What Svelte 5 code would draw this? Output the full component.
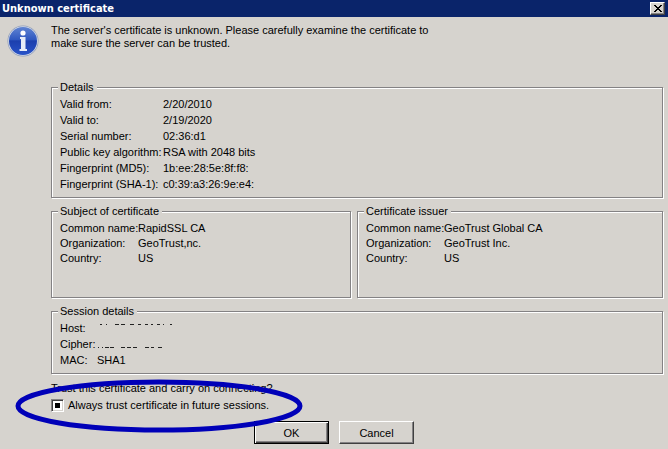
<script>
    let trust = $state(false);
    let partial = $state(true);

    const details = [
        ["Valid from:", "2/20/2010"],
        ["Valid to:", "2/19/2020"],
        ["Serial number:", "02:36:d1"],
        ["Public key algorithm:", "RSA with 2048 bits"],
        ["Fingerprint (MD5):", "1b:ee:28:5e:8f:f8:"],
        ["Fingerprint (SHA-1):", "c0:39:a3:26:9e:e4:"],
    ];
    const subject = [
        ["Common name:", "RapidSSL CA"],
        ["Organization:", "GeoTrust,nc."],
        ["Country:", "US"],
    ];
    const issuer = [
        ["Common name:", "GeoTrust Global CA"],
        ["Organization:", "GeoTrust Inc."],
        ["Country:", "US"],
    ];
</script>

{#snippet rows(list)}
    {#each list as [label, value]}
        <dt>{label}</dt>
        <dd>{value}</dd>
    {/each}
{/snippet}

<div class="dialog">
    <header>
        <h1>Unknown certificate</h1>
        <button class="close" aria-label="Close">
            <svg width="8" height="7" viewBox="0 0 8 7" shape-rendering="crispEdges">
                <path d="M0 0h2v1h1v1h2v-1h1v-1h2v1h-1v1h-1v1h-1v1h1v1h1v1h1v1h-2v-1h-1v-1h-2v1h-1v1h-2v-1h1v-1h1v-1h1v-1h-1v-1h-1v-1h-1z" />
            </svg>
        </button>
    </header>

    <main>
        <svg class="info" width="32" height="32" viewBox="0 0 32 32">
            <defs>
                <linearGradient id="ball" x1="0" y1="0" x2="0" y2="1">
                    <stop offset="0" stop-color="#5f83d2" />
                    <stop offset="0.45" stop-color="#2f58c0" />
                    <stop offset="0.5" stop-color="#1c3fae" />
                    <stop offset="1" stop-color="#2853c8" />
                </linearGradient>
            </defs>
            <circle cx="16" cy="16" r="15.5" fill="#8f9cb8" />
            <circle cx="16" cy="16" r="14.8" fill="#d5dbe8" />
            <circle cx="16" cy="16" r="14" fill="url(#ball)" />
            <circle cx="16" cy="8" r="2.6" fill="#fff" />
            <path d="M13 12h5.500v12h1.500v2h-7.500v-2h1.500v-10h-1z" fill="#e6ecf8" />
        </svg>

        <div class="body">
            <p class="message">
                The server's certificate is unknown. Please carefully examine the certificate to
                make sure the server can be trusted.
            </p>

            <fieldset class="details">
                <legend>Details</legend>
                <dl>{@render rows(details)}</dl>
            </fieldset>

            <div class="parties">
                <fieldset>
                    <legend>Subject of certificate</legend>
                    <dl>{@render rows(subject)}</dl>
                </fieldset>
                <fieldset>
                    <legend>Certificate issuer</legend>
                    <dl>{@render rows(issuer)}</dl>
                </fieldset>
            </div>

            <fieldset class="session">
                <legend>Session details</legend>
                <dl>
                    <dt>Host:</dt>
                    <dd>
                        <svg class="erased" width="80" height="16" viewBox="0 0 80 16" shape-rendering="crispEdges">
                            <path d="M3 4.5h2M9 4.5h1M18 4.5h4M24 4.5h4M33 4.5h4M41 4.5h3M48 4.5h3M54 4.5h2M60 4.5h3M66 4.5h1M73 4.5h2" />
                        </svg>
                    </dd>
                    <dt>Cipher:</dt>
                    <dd>
                        <svg class="erased" width="80" height="16" viewBox="0 0 80 16" shape-rendering="crispEdges">
                            <path d="M1 11.5h1M5 11.5h1M8 11.5h4M13 11.5h4M24 11.5h4M30 11.5h4M36 11.5h4M48 11.5h4M54 11.5h3M61 11.5h4" />
                        </svg>
                    </dd>
                    <dt>MAC:</dt>
                    <dd>SHA1</dd>
                </dl>
            </fieldset>

            <div class="trust">
                <p>Trust this certificate and carry on connecting?</p>
                <label>
                    <input type="checkbox" bind:checked={trust} bind:indeterminate={partial} />
                    Always trust certificate in future sessions.
                </label>
                <svg class="ring" width="290" height="56" viewBox="0 0 290 56">
                    <ellipse cx="145" cy="28" rx="141" ry="24" />
                </svg>
            </div>
        </div>
    </main>

    <footer>
        <button class="default">OK</button>
        <button>Cancel</button>
    </footer>
</div>

<style>
    :global(body) {
        background: #d6d3ce;
    }
    .dialog {
        font: 11px/16px "Liberation Sans", Arial, sans-serif;
        color: #000;
        background: #d6d3ce;
    }
    header {
        display: flex;
        justify-content: space-between;
        align-items: center;
        height: 17px;
        padding: 0 3px 0 2px;
        background: #0a246a;
    }
    h1 {
        margin: 0;
        font: bold 11px/16px "DejaVu Sans Condensed", "DejaVu Sans", sans-serif;
        color: #fff;
    }
    p,
    dl,
    dd {
        margin: 0;
    }
    dt {
        white-space: nowrap;
    }
    button {
        font: inherit;
        color: #000;
        width: 75px;
        height: 23px;
        padding: 0;
        background: #d6d3ce;
        border: 1px solid;
        border-color: #fff #404040 #404040 #fff;
        box-shadow: inset -1px -1px 0 #848284;
    }
    .default {
        border-color: #000;
        box-shadow:
            inset 1px 1px 0 #fff,
            inset -1px -1px 0 #404040,
            inset -2px -2px 0 #848284;
    }
    .close {
        display: flex;
        align-items: center;
        justify-content: center;
        width: 15px;
        height: 13px;
    }
    main {
        display: grid;
        grid-template-columns: 32px 1fr;
        column-gap: 12px;
        padding: 7px 5px 0 7px;
    }
    .info {
        margin-top: 1px;
    }
    .message {
        max-width: 390px;
        min-height: 56px;
        line-height: 13px;
    }
    .body {
        min-width: 0;
    }
    fieldset {
        min-width: 0;
        margin: 0 0 6px;
        padding: 2px 8px 5px;
        border: 1px solid #848284;
        box-shadow:
            1px 1px 0 #fff,
            inset 1px 1px 0 #fff;
    }
    legend {
        margin-left: -2px;
        padding: 0 3px 0 2px;
        line-height: 14px;
        background: #d6d3ce;
    }
    dl {
        display: grid;
        grid-template-columns: 103px 1fr;
        grid-auto-rows: 16px;
    }
    .parties {
        display: grid;
        grid-template-columns: 300px 1fr;
        gap: 6px;
    }
    .parties dl {
        grid-template-columns: 78px 1fr;
        grid-auto-rows: 15px;
        min-height: 72px;
    }
    .session dl {
        grid-template-columns: 37px 1fr;
    }
    .erased {
        display: block;
        stroke: #222;
    }
    .trust {
        position: relative;
    }
    label {
        display: flex;
        align-items: center;
        gap: 4px;
        margin-top: 1px;
    }
    input {
        appearance: none;
        width: 13px;
        height: 13px;
        margin: 0;
        background: #fff;
        border: 1px solid;
        border-color: #848284 #fff #fff #848284;
        box-shadow:
            inset 1px 1px 0 #404040,
            inset -1px -1px 0 #d6d3ce;
    }
    input:checked,
    input:indeterminate {
        background: linear-gradient(#000, #000) center / 5px 5px no-repeat #fff;
    }
    .ring {
        position: absolute;
        left: -37px;
        top: -2px;
        fill: none;
        stroke: #0000b8;
        stroke-width: 5;
        pointer-events: none;
    }
    footer {
        display: flex;
        justify-content: center;
        gap: 10px;
        padding: 8px 0 5px;
    }
</style>
